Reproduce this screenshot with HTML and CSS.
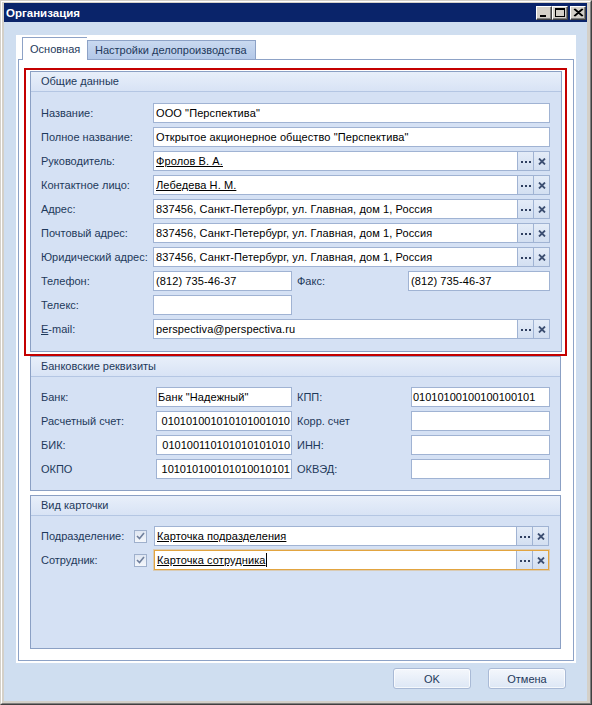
FILE: index.html
```html
<!DOCTYPE html>
<html lang="ru">
<head>
<meta charset="utf-8">
<title>Организация</title>
<link rel="stylesheet" href="styles.css">
</head>
<body>
<div class="window">
  <div class="frame">
    <div class="titlebar">
      <span class="title">Организация</span>
      <div class="tb-buttons">
        <span class="tb-btn"><svg width="14" height="12" viewBox="0 0 14 12"><rect x="3" y="8" width="6" height="2" fill="#000"/></svg></span>
        <span class="tb-btn"><svg width="14" height="12" viewBox="0 0 14 12"><rect x="2.5" y="1.5" width="9" height="8" fill="none" stroke="#000"/><rect x="2" y="1" width="10" height="2" fill="#000"/></svg></span>
        <span class="tb-btn close"><svg width="14" height="12" viewBox="0 0 14 12"><path d="M3 2 L11 9 M4 2 L12 9 M11 2 L3 9 M12 2 L4 9" stroke="#000" stroke-width="1.1"/></svg></span>
      </div>
    </div>
    <div class="client">
      <div class="tabctrl">
        <div class="tabs">
          <div class="tab active">Основная</div>
          <div class="tab">Настройки делопроизводства</div>
        </div>
        <div class="pane">
          <div class="highlight">
            <section class="group">
              <div class="ghead">Общие данные</div>
              <div class="gbody grid-main">
                <label class="lbl">Название:</label>
                <div class="inp span3">ООО "Перспектива"</div>
                <label class="lbl">Полное название:</label>
                <div class="inp span3">Открытое акционерное общество "Перспектива"</div>
                <label class="lbl">Руководитель:</label>
                <div class="inp span3 btn-edit"><span class="val link">Фролов В. А.</span><span class="eb dots"><i></i><i></i><i></i></span><span class="eb clr"><svg width="8" height="7" viewBox="0 0 8 7"><path d="M1 0.5 L7 6.5 M7 0.5 L1 6.5" stroke="#3d4f72" stroke-width="1.8"/></svg></span></div>
                <label class="lbl">Контактное лицо:</label>
                <div class="inp span3 btn-edit"><span class="val link">Лебедева Н. М.</span><span class="eb dots"><i></i><i></i><i></i></span><span class="eb clr"><svg width="8" height="7" viewBox="0 0 8 7"><path d="M1 0.5 L7 6.5 M7 0.5 L1 6.5" stroke="#3d4f72" stroke-width="1.8"/></svg></span></div>
                <label class="lbl">Адрес:</label>
                <div class="inp span3 btn-edit"><span class="val">837456, Санкт-Петербург, ул. Главная, дом 1, Россия</span><span class="eb dots"><i></i><i></i><i></i></span><span class="eb clr"><svg width="8" height="7" viewBox="0 0 8 7"><path d="M1 0.5 L7 6.5 M7 0.5 L1 6.5" stroke="#3d4f72" stroke-width="1.8"/></svg></span></div>
                <label class="lbl">Почтовый адрес:</label>
                <div class="inp span3 btn-edit"><span class="val">837456, Санкт-Петербург, ул. Главная, дом 1, Россия</span><span class="eb dots"><i></i><i></i><i></i></span><span class="eb clr"><svg width="8" height="7" viewBox="0 0 8 7"><path d="M1 0.5 L7 6.5 M7 0.5 L1 6.5" stroke="#3d4f72" stroke-width="1.8"/></svg></span></div>
                <label class="lbl">Юридический адрес:</label>
                <div class="inp span3 btn-edit"><span class="val">837456, Санкт-Петербург, ул. Главная, дом 1, Россия</span><span class="eb dots"><i></i><i></i><i></i></span><span class="eb clr"><svg width="8" height="7" viewBox="0 0 8 7"><path d="M1 0.5 L7 6.5 M7 0.5 L1 6.5" stroke="#3d4f72" stroke-width="1.8"/></svg></span></div>
                <label class="lbl">Телефон:</label>
                <div class="inp">(812) 735-46-37</div>
                <label class="lbl lbl2">Факс:</label>
                <div class="inp">(812) 735-46-37</div>
                <label class="lbl">Телекс:</label>
                <div class="inp"></div>
                <span class="empty span2"></span>
                <label class="lbl"><u>E</u>-mail:</label>
                <div class="inp span3 btn-edit"><span class="val">perspectiva@perspectiva.ru</span><span class="eb dots"><i></i><i></i><i></i></span><span class="eb clr"><svg width="8" height="7" viewBox="0 0 8 7"><path d="M1 0.5 L7 6.5 M7 0.5 L1 6.5" stroke="#3d4f72" stroke-width="1.8"/></svg></span></div>
              </div>
            </section>
          </div>

          <section class="group g-bank">
            <div class="ghead">Банковские реквизиты</div>
            <div class="gbody grid-bank">
              <label class="lbl">Банк:</label>
              <div class="inp num">Банк "Надежный"</div>
              <label class="lbl lbl2">КПП:</label>
              <div class="inp num"><span class="digits">01010100100100100101</span></div>
              <label class="lbl">Расчетный счет:</label>
              <div class="inp num end"><span class="digits">010101001010101001010</span></div>
              <label class="lbl lbl2">Корр. счет</label>
              <div class="inp num"></div>
              <label class="lbl">БИК:</label>
              <div class="inp num end"><span class="digits">010100110101010101010</span></div>
              <label class="lbl lbl2">ИНН:</label>
              <div class="inp num"></div>
              <label class="lbl">ОКПО</label>
              <div class="inp num end"><span class="digits">101010100101010010101</span></div>
              <label class="lbl lbl2">ОКВЭД:</label>
              <div class="inp num"></div>
            </div>
          </section>

          <section class="group g-card">
            <div class="ghead">Вид карточки</div>
            <div class="gbody grid-card">
              <label class="lbl">Подразделение:</label>
              <span class="chk"><svg width="9" height="8" viewBox="0 0 9 8"><path d="M1 4 L3.5 6.5 L8 1" fill="none" stroke="#6f7f9c" stroke-width="1.6"/></svg></span>
              <div class="inp btn-edit card-inp"><span class="val link">Карточка подразделения</span><span class="eb dots"><i></i><i></i><i></i></span><span class="eb clr"><svg width="8" height="7" viewBox="0 0 8 7"><path d="M1 0.5 L7 6.5 M7 0.5 L1 6.5" stroke="#3d4f72" stroke-width="1.8"/></svg></span></div>
              <label class="lbl">Сотрудник:</label>
              <span class="chk"><svg width="9" height="8" viewBox="0 0 9 8"><path d="M1 4 L3.5 6.5 L8 1" fill="none" stroke="#6f7f9c" stroke-width="1.6"/></svg></span>
              <div class="inp btn-edit card-inp focused"><span class="val link">Карточка сотрудника</span><span class="caret"></span><span class="eb dots"><i></i><i></i><i></i></span><span class="eb clr"><svg width="8" height="7" viewBox="0 0 8 7"><path d="M1 0.5 L7 6.5 M7 0.5 L1 6.5" stroke="#3d4f72" stroke-width="1.8"/></svg></span></div>
            </div>
          </section>
        </div>
      </div>
      <div class="footer">
        <button class="btn">OK</button>
        <button class="btn">Отмена</button>
      </div>
    </div>
  </div>
</div>
</body>
</html>
```

FILE: styles.css
```css
* { box-sizing: border-box; }
html, body { margin: 0; padding: 0; }
body {
  width: 592px;
  height: 705px;
  overflow: hidden;
  font-family: "Liberation Sans", Arial, sans-serif;
  font-size: 11px;
  color: #1e395b;
}

.window {
  width: 592px;
  height: 705px;
  border: 1px solid;
  border-color: #d4d0c8 #404040 #404040 #d4d0c8;
}
.frame {
  height: 100%;
  border: 1px solid;
  border-color: #ffffff #808080 #808080 #ffffff;
  background: #d4d0c8;
  padding: 1px 3px 2px 2px;
  display: flex;
  flex-direction: column;
}

.titlebar {
  height: 19px;
  flex: none;
  background: #0a246a;
  display: flex;
  align-items: center;
  padding: 0 1px 0 2px;
  color: #fff;
}
.title {
  font-weight: bold;
  font-size: 11.5px;
  flex: 1;
}
.tb-buttons { display: flex; align-items: center; }
.tb-btn {
  width: 16px;
  height: 14px;
  background: #d4d0c8;
  border: 1px solid;
  border-color: #ffffff #404040 #404040 #ffffff;
  box-shadow: inset -1px -1px 0 #808080;
  display: flex;
  align-items: center;
  justify-content: center;
}
.tb-btn.close { margin-left: 2px; }

.client {
  flex: 1;
  background: #cfdef0;
  padding: 13px 11px 0 12px;
  display: flex;
  flex-direction: column;
}
.tabctrl {
  height: 628px;
  background: #fff;
  padding: 2px;
  display: flex;
  flex-direction: column;
}
.tabs {
  height: 22px;
  display: flex;
  align-items: flex-end;
  padding-left: 4px;
}
.tab {
  height: 19px;
  width: 169px;
  border: 1px solid #8da2c6;
  border-bottom: none;
  background: linear-gradient(#c9d9f0, #b3c8e8);
  color: #1e395b;
  line-height: 18px;
  padding-left: 7px;
  white-space: nowrap;
}
.tab.active {
  height: 23px;
  width: 65px;
  margin-bottom: -1px;
  background: #fff;
  position: relative;
  z-index: 1;
  line-height: 22px;
  padding-left: 7px;
  border-right: none;
}

.pane {
  flex: 1;
  border: 1px solid #8da2c6;
  padding: 8px 0 11px 0;
  display: flex;
  flex-direction: column;
}
.highlight {
  margin: 0 6px 0 5px;
  border: 2px solid #c40000;
  padding: 1px 3px 2px 4px;
}

.group {
  border: 1px solid #8ba0c4;
  background: #d5e1f4;
}
.g-bank { margin: 0 12px 0 11px; }
.g-card { margin: 4px 12px 0 11px; flex: 1; }

.ghead {
  height: 20px;
  border-bottom: 1px solid #b4c6e3;
  background: linear-gradient(#e8effa, #d8e3f5);
  padding-left: 10px;
  line-height: 19px;
  color: #1e395b;
}
.gbody {
  display: grid;
  grid-auto-rows: 20px;
  row-gap: 4px;
  padding: 11px 11px 12px 10px;
}
.grid-main { grid-template-columns: 112px 139px 116px 142px; }
.grid-bank {
  grid-template-columns: 115px 136px 119px 139px;
  padding-top: 10px;
  padding-bottom: 11px;
}
.grid-card {
  grid-template-columns: 93px 13px 1fr;
  padding-top: 10px;
}

.span3 { grid-column: 2 / 5; }
.span2 { grid-column: 3 / 5; }

.lbl {
  display: flex;
  align-items: center;
  white-space: nowrap;
  color: #1e395b;
}
.lbl2 { padding-left: 5px; }

.inp {
  height: 20px;
  border: 1px solid #a0b3d3;
  background: #fff;
  display: flex;
  align-items: center;
  padding-left: 2px;
  color: #000;
  white-space: nowrap;
  overflow: hidden;
  letter-spacing: 0.1px;
}
.inp.num { padding-left: 1px; }
.inp.end { justify-content: flex-end; padding-right: 1px; }
.digits { flex: none; font-size: 11px; letter-spacing: 0; }

.btn-edit { padding-right: 0; }
.val { flex: 1; overflow: hidden; }
.link { text-decoration: underline; }
.eb {
  flex: none;
  width: 16px;
  height: 100%;
  border-left: 1px solid #a0b3d3;
  background: linear-gradient(#e4ecf8, #d3dff1);
  display: flex;
  align-items: center;
  justify-content: center;
}
.dots { gap: 2px; padding-top: 1px; }
.dots i {
  display: block;
  width: 2px;
  height: 2px;
  background: #2f3f60;
}

.chk {
  align-self: center;
  width: 13px;
  height: 13px;
  border: 1px solid #9fb0cc;
  background: linear-gradient(#dfe6f2, #f4f7fb);
  display: flex;
  align-items: center;
  justify-content: center;
}
.card-inp { margin-left: 7px; }
.focused {
  border-color: #e2a440;
  box-shadow: 0 0 0 1px rgba(226, 164, 64, 0.35);
}
.focused .val { flex: none; }
.caret {
  width: 1px;
  height: 14px;
  background: #000;
  flex: none;
  margin-right: auto;
}

.footer {
  display: flex;
  justify-content: flex-end;
  gap: 17px;
  padding: 5px 10px 0 0;
}
.btn {
  width: 78px;
  height: 21px;
  border: 1px solid #a9bad6;
  border-radius: 3px;
  background: linear-gradient(#f4f7fc, #dde7f5);
  box-shadow: inset 0 0 0 1px rgba(255, 255, 255, 0.7);
  font-family: "Liberation Sans", Arial, sans-serif;
  font-size: 11px;
  color: #1e395b;
  padding: 0;
}
```
